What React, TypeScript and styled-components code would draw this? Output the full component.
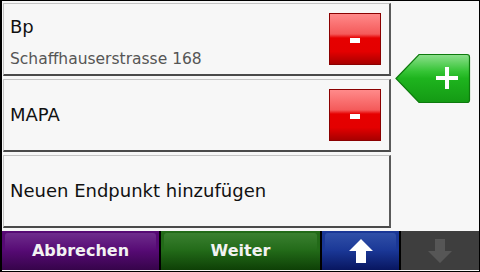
import styled, { createGlobalStyle } from "styled-components";

const Global = createGlobalStyle`
  html, body { margin: 0; padding: 0; background: #000; }
  body { font-family: "DejaVu Sans", "Liberation Sans", sans-serif; }
`;

const Screen = styled.div`
  width: 480px;
  height: 272px;
  box-sizing: border-box;
  border: 1px solid #000;
  border-left-width: 2px;
  background: #f7f7f7;
  display: flex;
  flex-direction: column;
  overflow: hidden;
`;

const Main = styled.div`
  flex: 1;
  display: flex;
  padding: 2px 0 0 1px;
`;

const List = styled.div`
  width: 388px;
  display: flex;
  flex-direction: column;
  gap: 3px;
`;

const Card = styled.div`
  height: 73px;
  box-sizing: border-box;
  border: 1px solid #c4c4c4;
  border-right: 2px solid #5a5a5a;
  border-bottom: 2px solid #4a4a4a;
  background: #f7f7f7;
  display: flex;
  align-items: center;
  padding: 0 8px 0 6px;
`;

const Texts = styled.div<{ $twoLines: boolean }>`
  flex: 1;
  display: flex;
  flex-direction: column;
  gap: 13px;
  margin-top: ${(p) => (p.$twoLines ? "5px" : "-2px")};
`;

const Title = styled.div`
  font-size: 18px;
  color: #111;
`;

const Sub = styled.div`
  font-size: 15.5px;
  color: #555;
`;

const RemoveButton = styled.div`
  width: 52px;
  height: 52px;
  box-sizing: border-box;
  border: 1px solid #8a0000;
  background: linear-gradient(
    to bottom,
    #ff8a8a 0%,
    #f45a5a 40%,
    #e60000 48%,
    #e40000 75%,
    #a80000 100%
  );
  display: flex;
  align-items: center;
  justify-content: center;
  margin-left: auto;
`;

const Minus = styled.div`
  width: 10px;
  height: 5px;
  background: #fff;
  margin-top: 2px;
`;

const Side = styled.div`
  flex: 1;
  display: flex;
  justify-content: flex-start;
  padding-top: 50px;
  padding-left: 4px;
`;

const Bar = styled.div`
  height: 39px;
  margin: 3px 0 1px;
  display: grid;
  grid-template-columns: 157px 159px 77px 1fr;
  gap: 2px;
  background: #000;
`;

const BarButton = styled.div<{ $tone: string; $light: string; $dark: string }>`
  position: relative;
  display: flex;
  align-items: center;
  justify-content: center;
  color: #f2f2f2;
  font-weight: bold;
  font-size: 16px;
  background: linear-gradient(to bottom, ${(p) => p.$tone} 0%, ${(p) => p.$tone} 50%, ${(p) => p.$dark} 100%);

  &::before {
    content: "";
    position: absolute;
    left: 3px;
    right: 3px;
    top: 2px;
    height: 45%;
    border-radius: 3px;
    background: linear-gradient(to bottom, ${(p) => p.$light}, ${(p) => p.$tone});
  }

  > * {
    position: relative;
  }
`;

const Disabled = styled.div`
  display: flex;
  align-items: center;
  justify-content: center;
  background: #3e3e3e;
`;

const AddTag = () => (
  <svg width="76" height="51" viewBox="0 0 76 51">
    <defs>
      <linearGradient id="g" x1="0" y1="0" x2="0" y2="1">
        <stop offset="0" stopColor="#8ee08e" />
        <stop offset="0.35" stopColor="#35c435" />
        <stop offset="0.5" stopColor="#1eb41e" />
        <stop offset="1" stopColor="#149a14" />
      </linearGradient>
    </defs>
    <path
      d="M1 25.5 L24 1.5 L72 1.5 Q74.5 1.5 74.5 4 L74.5 47 Q74.5 49.5 72 49.5 L24 49.5 Z"
      fill="url(#g)"
      stroke="#0d7a0d"
      strokeWidth="1.2"
    />
    <rect x="41" y="23" width="22" height="4" fill="#fff" />
    <rect x="50" y="14" width="4" height="22" fill="#fff" />
  </svg>
);

const ArrowUp = ({ color }: { color: string }) => (
  <svg width="26" height="26" viewBox="0 0 26 26">
    <path d="M13 1 L25 13 L18 13 L18 25 L8 25 L8 13 L1 13 Z" fill={color} />
  </svg>
);

const ArrowDown = ({ color }: { color: string }) => (
  <svg width="26" height="26" viewBox="0 0 26 26">
    <path d="M13 25 L25 13 L18 13 L18 1 L8 1 L8 13 L1 13 Z" fill={color} />
  </svg>
);

const stops = [
  { name: "Bp", address: "Schaffhauserstrasse 168" },
  { name: "MAPA" },
];

export default function App() {
  return (
    <>
      <Global />
      <Screen>
        <Main>
          <List>
            {stops.map((s) => (
              <Card key={s.name}>
                <Texts $twoLines={!!s.address}>
                  <Title>{s.name}</Title>
                  {s.address && <Sub>{s.address}</Sub>}
                </Texts>
                <RemoveButton>
                  <Minus />
                </RemoveButton>
              </Card>
            ))}
            <Card>
              <Texts $twoLines={false}>
                <Title>Neuen Endpunkt hinzufügen</Title>
              </Texts>
            </Card>
          </List>
          <Side>
            <div>
              <AddTag />
            </div>
          </Side>
        </Main>
        <Bar>
          <BarButton $tone="#560a74" $light="#6e2c8c" $dark="#36044a">
            <span>Abbrechen</span>
          </BarButton>
          <BarButton $tone="#226a18" $light="#3a8030" $dark="#0e4006">
            <span>Weiter</span>
          </BarButton>
          <BarButton $tone="#1a3796" $light="#3050a8" $dark="#081660">
            <ArrowUp color="#fff" />
          </BarButton>
          <Disabled>
            <ArrowDown color="#565656" />
          </Disabled>
        </Bar>
      </Screen>
    </>
  );
}
